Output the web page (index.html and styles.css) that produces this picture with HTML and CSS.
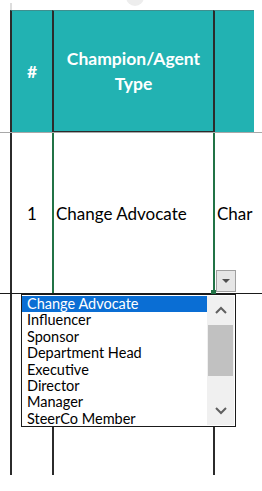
FILE: index.html
```html
<!doctype html>
<html>
    <head>
        <title>Champion Types</title>
        <meta charset="utf-8">
        <link rel="stylesheet" href="styles.css">
    </head>
    <body>
        <div id="topbar"><span class="knob"></span><span class="stub"></span></div>
        <div class="row head">
            <div class="gutter"></div>
            <div class="cell num">#</div>
            <div class="cell type">Champion/Agent<br>Type</div>
            <div class="cell next"></div>
            <div class="filler"></div>
        </div>
        <div class="row data">
            <div class="gutter"></div>
            <div class="cell num">1</div>
            <div class="cell type">Change Advocate</div>
            <div class="cell next">Char</div>
            <div class="filler"></div>
            <span class="handle"></span>
            <span class="drop"><span class="tri"></span></span>
            <div class="list">
                <ul class="items">
                    <li class="picked">Change Advocate</li>
                    <li>Influencer</li>
                    <li>Sponsor</li>
                    <li>Department Head</li>
                    <li>Executive</li>
                    <li>Director</li>
                    <li>Manager</li>
                    <li>SteerCo Member</li>
                </ul>
                <div class="scroll">
                    <svg class="arrow" width="12" height="8" viewBox="0 0 12 8"><path d="M1 7 L6 2 L11 7" fill="none" stroke="#606060" stroke-width="2"/></svg>
                    <div class="thumb"></div>
                    <svg class="arrow down" width="12" height="8" viewBox="0 0 12 8"><path d="M1 1 L6 6 L11 1" fill="none" stroke="#606060" stroke-width="2"/></svg>
                </div>
            </div>
        </div>
        <div class="row empty">
            <div class="gutter"></div>
            <div class="cell num"></div>
            <div class="cell type"></div>
            <div class="cell next"></div>
            <div class="filler"></div>
        </div>
    </body>
</html>
```

FILE: styles.css
```css
* {
    box-sizing: border-box;
}
body {
    margin: 0;
    background-color: #FFFFFF;
    font-family: Lato, "Open Sans", sans-serif;
    color: #000000;
}
#topbar {
    position: relative;
    height: 10px;
    overflow: hidden;
}
#topbar .knob {
    position: absolute;
    left: 126px;
    top: -12px;
    width: 18px;
    height: 18px;
    border-radius: 50%;
    background-color: #EDEDED;
}
#topbar .stub {
    position: absolute;
    left: 10px;
    top: 3px;
    width: 2px;
    height: 7px;
    background-color: #DDDDDD;
}
.row {
    position: relative;
    display: grid;
    grid-template-columns: 10px 42px 161px 41px 1fr;
}
.cell {
    border-left: 2px solid #2B2B2B;
}
.head {
    height: 123px;
    border-bottom: 1px solid #A8A8A8;
}
.head .cell {
    display: flex;
    align-items: center;
    justify-content: center;
    text-align: center;
    border-top: 1px solid #3F8F8F;
    background-color: #22B2B2;
    color: #FFFFFF;
    font-weight: bold;
    font-size: 17.5px;
    line-height: 25px;
}
.head .type {
    border-bottom: 1px solid #2B2B2B;
}
.data {
    height: 161px;
    border-bottom: 1px solid #1A1A1A;
    font-size: 17px;
}
.data .cell {
    display: flex;
    align-items: center;
    padding-top: 1px;
}
.data .num {
    justify-content: center;
}
.data .type {
    padding-left: 2px;
    border-left-color: #217346;
}
.data .next {
    padding-left: 2px;
    overflow: hidden;
    white-space: nowrap;
    border-left-color: #217346;
}
.empty {
    height: 181px;
}
.handle {
    position: absolute;
    left: 211px;
    top: 157px;
    width: 5px;
    height: 4px;
    background-color: #217346;
}
.drop {
    position: absolute;
    left: 216px;
    top: 137px;
    width: 20px;
    height: 22px;
    display: flex;
    align-items: center;
    justify-content: center;
    border: 1px solid #A0A0A0;
    background-color: #E6E6E6;
}
.tri {
    width: 0;
    height: 0;
    border-left: 4px solid transparent;
    border-right: 4px solid transparent;
    border-top: 4px solid #505050;
}
.list {
    position: absolute;
    z-index: 2;
    left: 21px;
    top: 161px;
    width: 215px;
    height: 133px;
    display: flex;
    border: 1px solid #1A1A1A;
    background-color: #FFFFFF;
}
.items {
    flex: 1;
    margin: 0;
    padding: 1px 0 0;
    list-style: none;
    font-size: 14.5px;
    line-height: 16.4px;
}
.items li {
    padding-left: 5px;
    height: 16.4px;
    white-space: nowrap;
}
.items .picked {
    background-color: #0A6ED4;
    color: #FFFFFF;
}
.scroll {
    width: 27px;
    margin: 1px 1px 1px 0;
    display: flex;
    flex-direction: column;
    align-items: center;
    background-color: #F0F0F0;
}
.arrow {
    margin-top: 10px;
    margin-bottom: 11px;
}
.arrow.down {
    margin-top: auto;
    margin-bottom: 10px;
}
.thumb {
    width: 25px;
    height: 51px;
    background-color: #C1C1C1;
}
```
